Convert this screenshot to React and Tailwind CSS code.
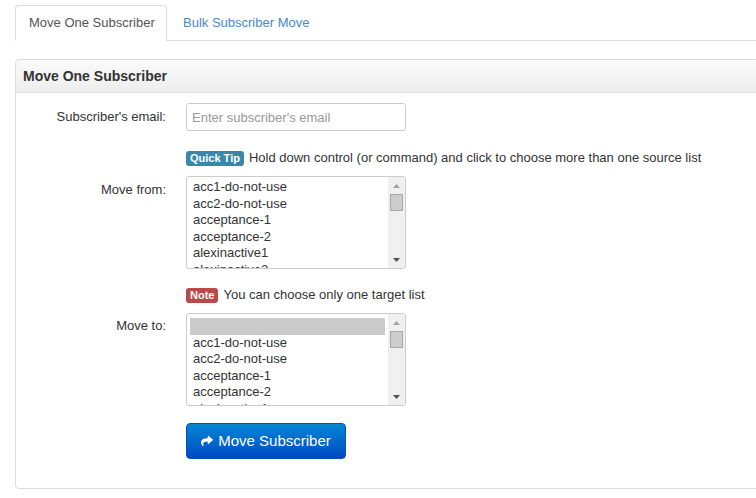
import React from 'react';
import { FaShare } from 'react-icons/fa';

const sourceLists = ['acc1-do-not-use', 'acc2-do-not-use', 'acceptance-1', 'acceptance-2', 'alexinactive1', 'alexinactive2'];
const targetLists = ['', 'acc1-do-not-use', 'acc2-do-not-use', 'acceptance-1', 'acceptance-2', 'alexinactive1'];

const Scrollbar = () => (
  <div className="flex w-[17px] shrink-0 flex-col bg-[#f0f0f0]">
    <div className="flex h-[17px] items-center justify-center">
      <svg width="7" height="4" viewBox="0 0 7 4">
        <polygon points="3.5,0 7,4 0,4" fill="#a3a3a3" />
      </svg>
    </div>
    <div className="mx-[2px] h-[17px] border border-[#a8a8a8] bg-[#cdcdcd]" />
    <div className="flex-1" />
    <div className="flex h-[17px] items-center justify-center">
      <svg width="7" height="4" viewBox="0 0 7 4">
        <polygon points="0,0 7,0 3.5,4" fill="#505050" />
      </svg>
    </div>
  </div>
);

// fake multi-select, partially scrolled like the original
const ListBox = ({ items, selected, offset }) => (
  <div className="flex h-[93px] w-[220px] overflow-hidden rounded-[3px] border border-[#ccc] bg-white">
    <div className={`flex-1 overflow-hidden px-[3px] ${offset}`}>
      {items.map((item, i) => (
        <div
          key={i}
          className={`h-[16.5px] whitespace-nowrap px-[3px] leading-[16.5px] text-[#333] ${i === selected ? 'bg-[#cbcbcb]' : ''}`}
        >
          {item}
        </div>
      ))}
    </div>
    <Scrollbar />
  </div>
);

const Row = ({ label, labelPad = '', children, className = '' }) => (
  <div className={`flex ${className}`}>
    <div className={`w-[150px] shrink-0 text-right text-[#333] ${labelPad}`}>{label}</div>
    <div className="ml-[20px]">{children}</div>
  </div>
);

const Hint = ({ badge, color, text, className = '' }) => (
  <Row label="" className={className}>
    <div className="flex h-[20px] items-center">
      <span className={`rounded-[3px] px-[4px] text-[11px] font-bold leading-[15px] text-white ${color}`}>{badge}</span>
      <span className="ml-[5px] text-[#333]">{text}</span>
    </div>
  </Row>
);

export default function App() {
  return (
    <div className="h-[498px] w-[756px] overflow-hidden bg-white text-[13px] leading-[20px]" style={{ fontFamily: '"Liberation Sans", Arial, sans-serif' }}>
      <div className="w-[820px] px-[15px] pt-[5px]">
        <ul className="flex border-b border-[#ddd]">
          <li className="-mb-px w-[152px] rounded-t-[4px] border border-[#ddd] border-b-white bg-white py-[8px] pl-[13px] leading-[18px] text-[#555]">
            Move One Subscriber
          </li>
          <li className="-mb-px border border-transparent py-[8px] pl-[15px] leading-[18px] text-[#428bca]">
            Bulk Subscriber Move
          </li>
        </ul>

        <div className="mt-[18px] rounded-[4px] border border-[#ddd]">
          <div className="rounded-t-[4px] border-b border-[#ddd] bg-gradient-to-b from-[#fafafa] to-[#eeeeee] py-[6px] pl-[7px] text-[14px] font-bold text-[#333]">
            Move One Subscriber
          </div>

          <div className="pb-[29px] pt-[10px]">
            <Row label="Subscriber's email:" className="items-center">
              <input
                type="text"
                placeholder="Enter subscriber's email"
                className="block h-[28px] w-[220px] rounded-[3px] border border-[#ccc] px-[5px] text-[13px] text-[#333] outline-none placeholder:text-[#999]"
              />
            </Row>

            <Hint
              className="mt-[17px]"
              badge="Quick Tip"
              color="bg-[#3a87ad]"
              text="Hold down control (or command) and click to choose more than one source list"
            />

            <Row label="Move from:" labelPad="pt-[4px]" className="mt-[8px]">
              <ListBox items={sourceLists} selected={-1} offset="pt-[2px]" />
            </Row>

            <Hint className="mt-[16px]" badge="Note" color="bg-[#b94a48]" text="You can choose only one target list" />

            <Row label="Move to:" labelPad="pt-[3px]" className="mt-[8px]">
              <ListBox items={targetLists} selected={0} offset="pt-[4px]" />
            </Row>

            <Row label="" className="mt-[17px]">
              <button
                type="button"
                className="flex h-[36px] w-[160px] items-center justify-center gap-[5px] rounded-[4px] border border-[#0a50b4] bg-gradient-to-b from-[#0a86d4] to-[#0048c4] text-[15px] text-white"
              >
                <FaShare className="h-[12px] w-[12px]" />
                <span>Move Subscriber</span>
              </button>
            </Row>
          </div>
        </div>
      </div>
    </div>
  );
}
